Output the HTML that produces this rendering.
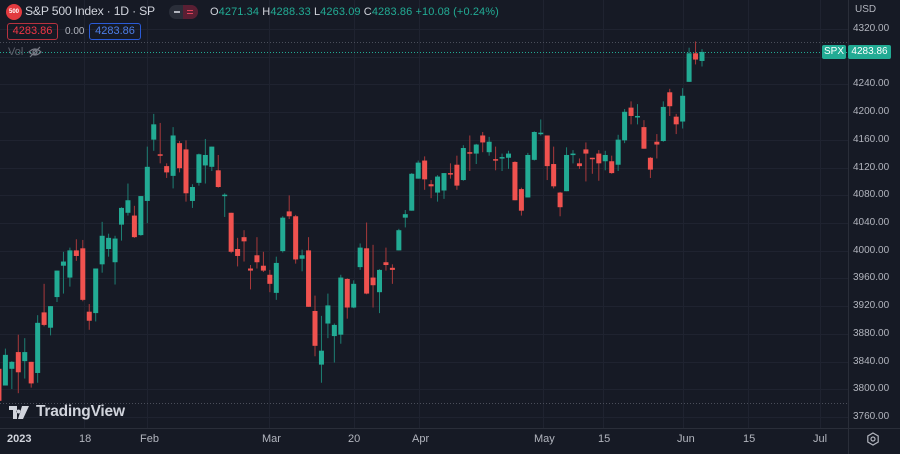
<!DOCTYPE html>
<html><head><meta charset="utf-8"><style>
body{margin:0;width:900px;height:454px;background:#161a25;overflow:hidden;font-family:"Liberation Sans",sans-serif;position:relative}
.t{position:absolute;white-space:nowrap}
.ax{position:absolute;left:853px;font-size:10px;color:#b2b5be}
</style></head><body>
<svg id="c" width="900" height="454" style="position:absolute;left:0;top:0"></svg>
<div class="t" style="left:6px;top:4px;width:16px;height:16px;border-radius:50%;background:#e23a3f;color:#fff;font-size:6px;font-weight:bold;line-height:16px;text-align:center">500</div>
<div class="t" style="left:25px;top:4px;font-size:12.2px;letter-spacing:-0.2px;color:#d1d4dc">S&amp;P 500 Index · 1D · SP</div>
<div class="t" style="left:169px;top:5px;width:29px;height:14px;border-radius:7px;background:#2a2e39"></div>
<div class="t" style="left:183px;top:5px;width:15px;height:14px;border-radius:0 7px 7px 0;background:#5a1f33"></div>
<div class="t" style="left:174px;top:11px;width:6px;height:2px;background:#b2b5be"></div>
<div class="t" style="left:187px;top:10px;width:6px;height:1px;background:#e0445a;box-shadow:0 3px 0 #e0445a"></div>
<div class="t" style="left:210px;top:6px;font-size:11px;color:#d1d4dc;letter-spacing:0.1px">O<span style="color:#22ab94">4271.34</span> H<span style="color:#22ab94">4288.33</span> L<span style="color:#22ab94">4263.09</span> C<span style="color:#22ab94">4283.86 +10.08 (+0.24%)</span></div>
<div class="t" style="left:7px;top:23px;width:49px;height:15px;border:1px solid #b8323f;border-radius:3px;color:#f23645;font-size:11px;line-height:15px;text-align:center">4283.86</div>
<div class="t" style="left:65px;top:26px;font-size:10px;color:#b2b5be">0.00</div>
<div class="t" style="left:89px;top:23px;width:50px;height:15px;border:1px solid #2a5bd7;border-radius:3px;color:#4d7ee8;font-size:11px;line-height:15px;text-align:center">4283.86</div>
<div class="t" style="left:8px;top:46px;font-size:11px;color:#5d606b">Vol</div>
<svg class="t" style="left:28px;top:46px" width="14" height="12" viewBox="0 0 14 12"><path d="M1 6Q7 0 13 6Q7 12 1 6Z" fill="none" stroke="#787b86" stroke-width="1.2"/><circle cx="7" cy="6" r="2" fill="none" stroke="#787b86" stroke-width="1.2"/><path d="M2 11L12 1" stroke="#787b86" stroke-width="1.2"/></svg>
<div class="t" style="left:822px;top:45px;width:24px;height:14px;background:#22ab94;color:#fff;font-size:10px;line-height:14px;text-align:center;border-radius:2px">SPX</div>
<div class="t" style="left:848px;top:45px;width:43px;height:14px;background:#22ab94;color:#fff;font-size:10px;line-height:14px;text-align:center;border-radius:2px">4283.86</div>
<div class="t" style="left:855px;top:4px;font-size:10px;color:#b2b5be">USD</div>
<div id="ax"></div>
<svg class="t" style="left:9px;top:406px" width="20" height="13" viewBox="0 0 20 13"><path d="M0 0H8V13H4V4H0Z M9.5 3.5a2 2 0 1 0 0.01 0Z M13 0H20L14 13H9Z" fill="#d1d4dc"/></svg>
<div class="t" style="left:36px;top:403px;font-size:15.5px;color:#d1d4dc;font-weight:bold;letter-spacing:-0.2px">TradingView</div>
<div class="t" style="left:7px;top:433px;font-size:11px;color:#d1d4dc;font-weight:bold">2023</div>
<div class="t" style="left:79px;top:433px;font-size:11px;color:#b2b5be">18</div>
<div class="t" style="left:140px;top:433px;font-size:11px;color:#b2b5be">Feb</div>
<div class="t" style="left:262px;top:433px;font-size:11px;color:#b2b5be">Mar</div>
<div class="t" style="left:348px;top:433px;font-size:11px;color:#b2b5be">20</div>
<div class="t" style="left:412px;top:433px;font-size:11px;color:#b2b5be">Apr</div>
<div class="t" style="left:534px;top:433px;font-size:11px;color:#b2b5be">May</div>
<div class="t" style="left:598px;top:433px;font-size:11px;color:#b2b5be">15</div>
<div class="t" style="left:677px;top:433px;font-size:11px;color:#b2b5be">Jun</div>
<div class="t" style="left:743px;top:433px;font-size:11px;color:#b2b5be">15</div>
<div class="t" style="left:813px;top:433px;font-size:11px;color:#b2b5be">Jul</div>
<svg class="t" style="left:866px;top:432px" width="14" height="14" viewBox="0 0 14 14"><path d="M7 1L12.2 4V10L7 13L1.8 10V4Z" fill="none" stroke="#b2b5be" stroke-width="1.2"/><circle cx="7" cy="7" r="2" fill="none" stroke="#b2b5be" stroke-width="1.2"/></svg>
<script>
var d=[[3829,3846,3783,3783],[3805,3858,3805,3849],[3829,3840,3800,3839],
[3853,3878,3794,3824],[3840,3873,3815,3853],[3839,3839,3802,3808],[3823,3906,3809,3895],[3910,3951,3890,3892],[3888,3919,3877,3919],[3932,3970,3925,3970],[3977,3997,3937,3983],[3960,4003,3947,3999],[3999,4015,3984,3991],[4002,4014,3926,3928],[3911,3922,3885,3898],[3909,3973,3897,3973],[3979,4040,3967,4020],[4001,4023,3990,4017],[3982,4020,3950,4016],[4036,4061,4013,4060],[4053,4095,4049,4071],[4049,4063,4017,4018],[4021,4077,4020,4077],
[4070,4148,4038,4119],[4158,4195,4142,4180],[4137,4182,4124,4136],[4120,4124,4103,4111],[4106,4176,4088,4164],[4153,4156,4111,4117],[4144,4157,4069,4081],[4070,4094,4060,4090],[4096,4138,4092,4137],[4121,4159,4095,4136],[4119,4148,4113,4148],[4114,4136,4089,4090],[4077,4081,4047,4079],[4053,4053,3995,3997],[4001,4017,3976,3991],[4018,4028,3983,4012],[3973,3978,3943,3970],[3992,4018,3973,3982],[3977,3997,3968,3970],
[3964,3971,3939,3951],[3938,3990,3928,3981],[3998,4048,3996,4046],[4055,4078,4044,4048],[4048,4050,3980,3986],[3987,4000,3969,3992],[3999,4018,3918,3918],[3912,3934,3847,3862],[3835,3905,3809,3855],[3894,3937,3873,3920],[3876,3894,3838,3892],[3878,3964,3865,3960],[3958,3959,3901,3917],[3917,3956,3916,3951],[3975,4009,3971,4003],[4002,4039,3936,3937],[3960,4007,3917,3949],[3939,3972,3909,3971],[3982,4003,3970,3978],[3974,3979,3951,3971],[3999,4030,3999,4028],[4046,4057,4032,4051],[4056,4110,4056,4109],
[4102,4128,4102,4125],[4128,4134,4086,4101],[4094,4100,4074,4091],[4082,4107,4069,4105],[4085,4110,4073,4110],[4110,4124,4102,4108],[4122,4135,4086,4092],[4100,4150,4099,4146],[4140,4164,4113,4138],[4138,4152,4123,4151],[4164,4169,4140,4154],[4140,4162,4135,4155],[4130,4148,4114,4129],[4132,4138,4113,4133],[4132,4142,4116,4138],[4126,4127,4071,4071],[4087,4089,4049,4056],[4075,4139,4075,4136],[4129,4170,4128,4169],
[4166,4187,4164,4168],[4164,4164,4100,4120],[4123,4148,4088,4091],[4082,4083,4048,4061],[4084,4147,4084,4136],[4136,4143,4124,4138],[4124,4131,4116,4120],[4144,4154,4098,4138],[4132,4132,4109,4131],[4138,4143,4099,4124],[4127,4142,4114,4136],[4127,4135,4109,4110],[4122,4165,4113,4158],[4157,4202,4153,4198],[4204,4213,4180,4192],[4190,4209,4180,4192],[4176,4186,4145,4145],[4132,4133,4103,4115],[4155,4166,4131,4151],[4156,4213,4155,4205],[4226,4231,4192,4206],[4191,4195,4166,4180],[4184,4232,4174,4221],[4241,4290,4241,4282],[4282,4299,4266,4273],[4271,4288,4263,4284]];
function Y(p){return 389-(p-3800)*0.6965}
function L(p){return 417-(p-3760)*0.693}
var s='';
var vx=[84,147,269,354,419,543,603,683,748,820];
vx.forEach(function(x){s+='<line x1="'+x+'.5" y1="0" x2="'+x+'.5" y2="428" stroke="#1f2330"/>'});
var ax='';
for(var p=3760;p<=4320;p+=40){var y=Math.round(L(p))+.5;s+='<line x1="0" y1="'+y+'" x2="848" y2="'+y+'" stroke="#1f2330"/>';if(Math.abs(y-52)>8)ax+='<div class="ax" style="top:'+(y-6.5)+'px">'+p+'.00</div>';}
document.getElementById('ax').innerHTML=ax;
s+='<line x1="0" y1="42.5" x2="848" y2="42.5" stroke="#4a4e5a" stroke-dasharray="1 2"/>';
s+='<line x1="0" y1="403.5" x2="848" y2="403.5" stroke="#4a4e5a" stroke-dasharray="1 2"/>';
s+='<line x1="0" y1="52.5" x2="848" y2="52.5" stroke="#22ab94" stroke-dasharray="1 2"/>';
s+='<line x1="848.5" y1="0" x2="848.5" y2="454" stroke="#2a2e39"/>';
s+='<line x1="0" y1="428.5" x2="900" y2="428.5" stroke="#2a2e39"/>';
for(var i=0;i<d.length;i++){var c=d[i],x=702-(d.length-1-i)*6.45;var up=c[3]>=c[0];var col=up?'#22ab94':'#f0524f';var wc=up?'#1d7f73':'#a8393b';
var t=Y(Math.max(c[0],c[3])),b=Y(Math.min(c[0],c[3]));if(b-t<1.5)b=t+1.5;
s+='<line x1="'+x+'" y1="'+Y(c[1])+'" x2="'+x+'" y2="'+Y(c[2])+'" stroke="'+wc+'" stroke-width="1"/>';
s+='<rect x="'+(x-2.5)+'" y="'+t+'" width="5" height="'+(b-t)+'" fill="'+col+'"/>';}
document.getElementById('c').innerHTML=s;
</script>
</body></html>
